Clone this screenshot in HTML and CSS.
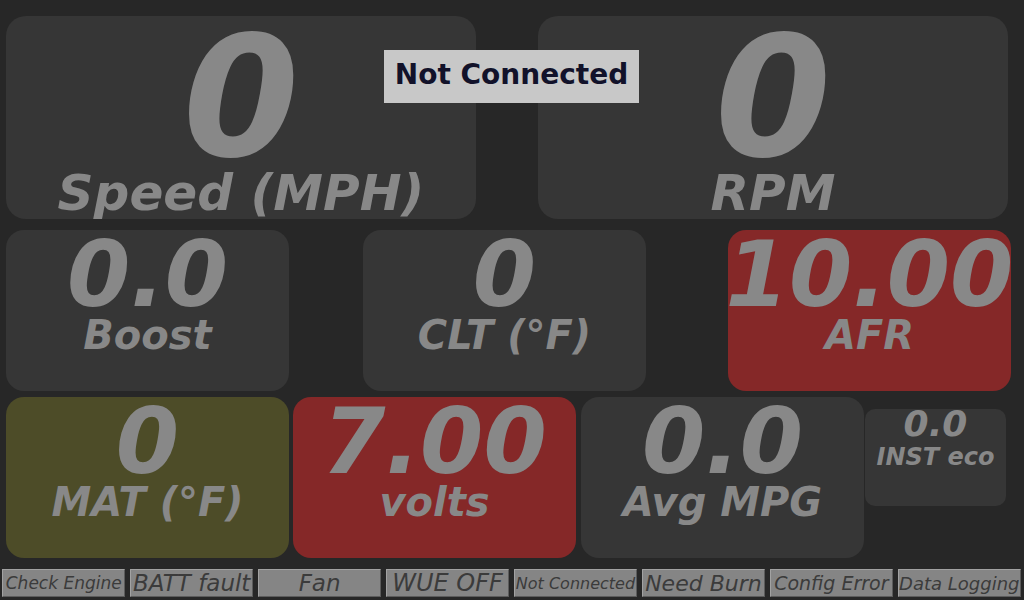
FILE: index.html
```html
<!DOCTYPE html>
<html lang="en">
<head>
    <meta charset="UTF-8">
    <meta name="viewport" content="width=device-width, initial-scale=1.0">
    <title>Dash</title>
    <link rel="stylesheet" href="styles.css">
</head>
<body>
    <div class="dash">
        <div class="row row-top">
            <div class="gauge gauge-big">
                <div class="value">0</div>
                <div class="label">Speed (MPH)</div>
            </div>
            <div class="gauge gauge-big">
                <div class="value">0</div>
                <div class="label">RPM</div>
            </div>
        </div>

        <div class="row row-mid">
            <div class="gauge gauge-mid">
                <div class="value">0.0</div>
                <div class="label">Boost</div>
            </div>
            <div class="gauge gauge-mid">
                <div class="value">0</div>
                <div class="label">CLT (°F)</div>
            </div>
            <div class="gauge gauge-mid warn">
                <div class="value">10.00</div>
                <div class="label">AFR</div>
            </div>
        </div>

        <div class="row row-low">
            <div class="gauge gauge-mid caution">
                <div class="value">0</div>
                <div class="label">MAT (°F)</div>
            </div>
            <div class="gauge gauge-mid warn">
                <div class="value">7.00</div>
                <div class="label">volts</div>
            </div>
            <div class="gauge gauge-mid">
                <div class="value">0.0</div>
                <div class="label">Avg MPG</div>
            </div>
            <div class="gauge gauge-small">
                <div class="value">0.0</div>
                <div class="label">INST eco</div>
            </div>
        </div>

        <div class="status-bar">
            <div class="indicator size-17">Check Engine</div>
            <div class="indicator size-23">BATT fault</div>
            <div class="indicator size-23">Fan</div>
            <div class="indicator size-24">WUE OFF</div>
            <div class="indicator size-16">Not Connected</div>
            <div class="indicator size-22">Need Burn</div>
            <div class="indicator size-19">Config Error</div>
            <div class="indicator size-18">Data Logging</div>
        </div>

        <div class="conn-banner">Not Connected</div>
    </div>
</body>
</html>
```

FILE: styles.css
```css
html, body {
    margin: 0;
    padding: 0;
}

body {
    width: 1024px;
    height: 600px;
    overflow: hidden;
    background-color: #272727;
    font-family: "DejaVu Sans", Verdana, sans-serif;
}

.dash {
    position: relative;
    height: 600px;
    padding-top: 16px;
    box-sizing: border-box;
}

.row {
    display: flex;
    align-items: flex-start;
    padding-left: 6px;
}

.row-top {
    gap: 62px;
}

.row-mid {
    margin-top: 11px;
}

.row-mid .gauge + .gauge {
    margin-left: 74px;
}

.row-mid .gauge:last-child {
    margin-left: 82px;
}

.row-low {
    margin-top: 6px;
}

.row-low .gauge:nth-child(2) {
    margin-left: 4px;
}

.row-low .gauge:nth-child(3) {
    margin-left: 5px;
}

.gauge {
    display: flex;
    flex-direction: column;
    align-items: center;
    flex-shrink: 0;
    overflow: hidden;
    background-color: #363636;
    color: #888888;
    font-weight: bold;
    font-style: oblique;
    white-space: nowrap;
}

.gauge .value,
.gauge .label {
    line-height: 1;
}

.gauge-big {
    width: 470px;
    height: 203px;
    border-radius: 20px;
}

.gauge-big .value {
    font-size: 167px;
    margin-top: -1px;
}

.gauge-big .label {
    font-size: 50px;
    margin-top: -14px;
}

.gauge-mid {
    width: 283px;
    height: 161px;
    border-radius: 18px;
}

.gauge-mid .value {
    font-size: 91px;
    margin-top: -1px;
}

.gauge-mid .label {
    font-size: 40px;
    margin-top: -5px;
}

.gauge-small {
    width: 141px;
    height: 97px;
    margin-top: 12px;
    margin-left: 1px;
    border-radius: 10px;
}

.gauge-small .value {
    font-size: 36px;
    margin-top: -3px;
}

.gauge-small .label {
    font-size: 24px;
    margin-top: 3px;
}

.warn {
    background-color: #852828;
}

.caution {
    background-color: #4d4c28;
}

/* status indicators along the bottom */
.status-bar {
    display: grid;
    grid-template-columns: repeat(8, 1fr);
    column-gap: 4.5px;
    padding: 0 3px 0 2px;
    margin-top: 11px;
    height: 28px;
}

.indicator {
    display: flex;
    justify-content: center;
    align-items: center;
    box-sizing: border-box;
    background-color: #858585;
    border: 1px solid;
    border-color: #a2a2a2 #5c5c5c #5c5c5c #a2a2a2;
    color: #3b3b3b;
    font-style: oblique;
    white-space: nowrap;
    overflow: hidden;
}

.size-16 { font-size: 16px; }
.size-17 { font-size: 17px; }
.size-18 { font-size: 18px; }
.size-19 { font-size: 19px; }
.size-22 { font-size: 22px; }
.size-23 { font-size: 23px; }
.size-24 { font-size: 24px; }

.conn-banner {
    position: absolute;
    left: 384px;
    top: 50px;
    width: 255px;
    height: 53px;
    box-sizing: border-box;
    padding-bottom: 5px;
    display: flex;
    justify-content: center;
    align-items: center;
    background-color: #c8c8c8;
    color: #12122a;
    font-size: 28px;
    font-weight: bold;
}
```
